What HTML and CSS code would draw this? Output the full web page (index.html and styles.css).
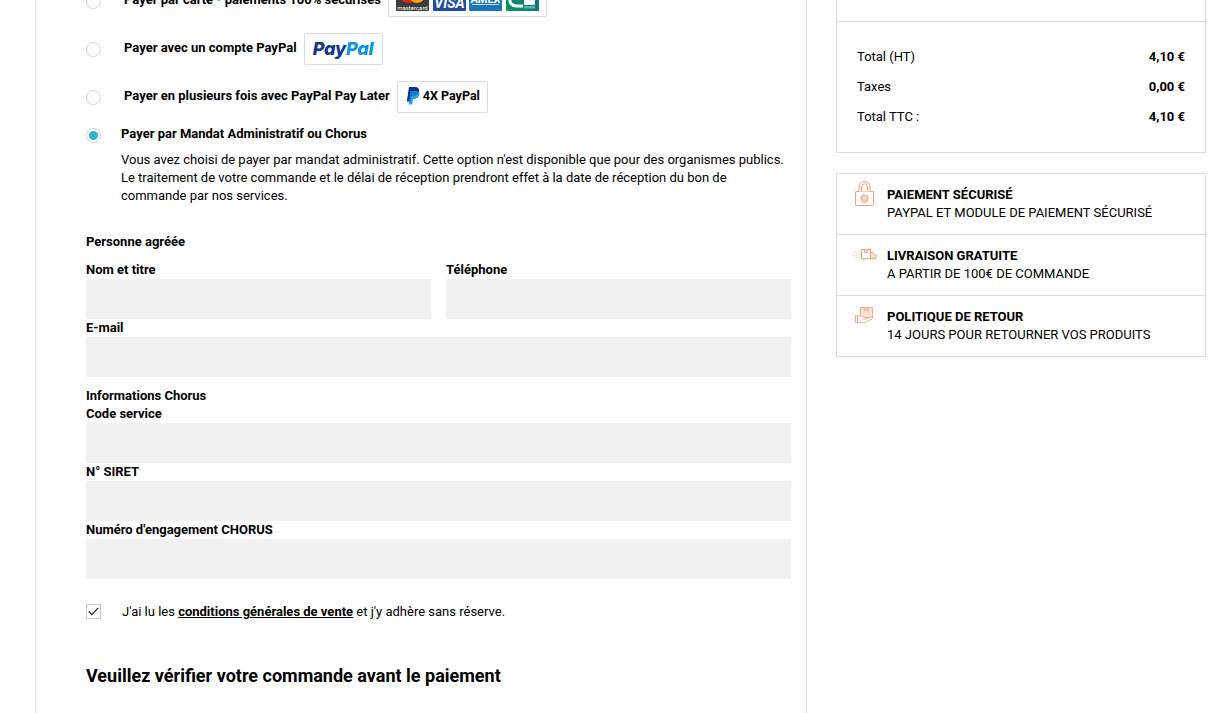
FILE: index.html
```html
<!DOCTYPE html>
<html lang="fr">
<head>
<meta charset="utf-8">
<title>Paiement</title>
<link rel="stylesheet" href="styles.css">
</head>
<body>
<div class="page">
  <main class="main">
    <div class="pay-row">
      <span class="radio"></span>
      <span class="pay-label">Payer par carte - paiements 100% sécurisés</span>
      <span class="badge badge-cards">
        <svg width="143" height="26" viewBox="0 0 143 26" class="cards">
          <rect x="0" y="0" width="33" height="26" rx="1" fill="#3c3a3a"/>
          <circle cx="12" cy="10" r="8" fill="#e2231a"/>
          <circle cx="21" cy="10" r="8" fill="#f79e1b"/>
          <text x="16.500" y="25" class="mc">mastercard</text>
          <rect x="37" y="0" width="33" height="26" rx="1" fill="#1f4f9c"/>
          <text x="53.500" y="23" class="visa">VISA</text>
          <rect x="73" y="0" width="33" height="26" rx="1" fill="#1b75bb"/>
          <text x="89.500" y="18" class="amex">AMEX</text>
          <rect x="76" y="19" width="27" height="1" fill="#cfe4f4"/>
          <defs>
            <linearGradient id="cb" x1="0" y1="1" x2="1" y2="0">
              <stop offset="0" stop-color="#0a9a5f"/>
              <stop offset="1" stop-color="#12608f"/>
            </linearGradient>
          </defs>
          <rect x="110" y="0" width="33" height="26" rx="1" fill="url(#cb)"/>
          <path d="M127 8.500h-7a6 6 0 0 0 0 12.500h7" fill="none" stroke="#fff" stroke-width="3"/>
          <rect x="128" y="14" width="11" height="6" rx="1" fill="#fff"/>
          <rect x="128" y="21" width="11" height="2.500" fill="#5fb0c4"/>
        </svg>
      </span>
    </div>
    <div class="pay-row">
      <span class="radio"></span>
      <span class="pay-label">Payer avec un compte PayPal</span>
      <span class="badge badge-paypal"><span class="pp-pay">Pay</span><span class="pp-pal">Pal</span></span>
    </div>
    <div class="pay-row">
      <span class="radio"></span>
      <span class="pay-label">Payer en plusieurs fois avec PayPal Pay Later</span>
      <span class="badge badge-4x">
        <svg class="pp-mark" width="14" height="18" viewBox="0 0 14 18">
          <path d="M3 0h6c3 0 4.500 1.600 4 4.300C12.400 7.600 10.300 9 7.300 9H5.400L4.500 14.500H0.800Z" fill="#0f2f8a"/>
          <path d="M4.500 4h5.500c2.500 0 3.800 1.300 3.400 3.600C12.900 10.400 11 12 8.400 12H7L6.200 17.500H2.600Z" fill="#0a8fdc" opacity="0.850"/>
        </svg>
        <span class="fourx">4X PayPal</span>
      </span>
    </div>
    <div class="mandat">
      <span class="radio radio-on"></span>
      <div class="mandat-body">
        <div class="mandat-title">Payer par Mandat Administratif ou Chorus</div>
        <p class="mandat-text">Vous avez choisi de payer par mandat administratif. Cette option n'est disponible que pour des organismes publics. Le traitement de votre commande et le délai de réception prendront effet à la date de réception du bon de commande par nos services.</p>
      </div>
    </div>

    <form class="form">
      <div class="section-title">Personne agréée</div>
      <div class="two-col">
        <div class="field">
          <label class="label">Nom et titre</label>
          <div class="input"></div>
        </div>
        <div class="field">
          <label class="label">Téléphone</label>
          <div class="input"></div>
        </div>
      </div>
      <div class="field">
        <label class="label">E-mail</label>
        <div class="input"></div>
      </div>
      <div class="section-title section-chorus">Informations Chorus</div>
      <div class="field">
        <label class="label">Code service</label>
        <div class="input"></div>
      </div>
      <div class="field">
        <label class="label">N° SIRET</label>
        <div class="input"></div>
      </div>
      <div class="field">
        <label class="label">Numéro d'engagement CHORUS</label>
        <div class="input"></div>
      </div>
    </form>

    <div class="terms">
      <span class="checkbox">
        <svg width="11" height="9" viewBox="0 0 11 9"><path d="M0.800 4.500 3.800 7.600 10.200 0.800" fill="none" stroke="#222" stroke-width="1.200"/></svg>
      </span>
      <span class="terms-text">J'ai lu les <a class="terms-link">conditions générales de vente</a> et j'y adhère sans réserve.</span>
    </div>
    <h2 class="review">Veuillez vérifier votre commande avant le paiement</h2>
  </main>

  <aside class="side">
    <div class="totals">
      <div class="totals-top"></div>
      <div class="totals-rows">
        <div class="total-row"><span>Total (HT)</span><b>4,10 €</b></div>
        <div class="total-row"><span>Taxes</span><b>0,00 €</b></div>
        <div class="total-row"><span>Total TTC :</span><b>4,10 €</b></div>
      </div>
    </div>
    <div class="trust">
      <div class="trust-row">
        <svg class="trust-icon icon-lock" width="19" height="25" viewBox="0 0 19 25">
          <rect x="0.500" y="10.500" width="18" height="14" rx="0.500" fill="#fff" stroke="#f79f7b"/>
          <path d="M4 10.500V5a5.500 4.500 0 0 1 11 0v5.500M6.500 10.500V5.500a3 2.800 0 0 1 6 0v5" fill="#fff" stroke="#f79f7b"/>
          <rect x="6" y="14" width="7" height="7" rx="3" fill="#fbd3c2" stroke="#f79f7b"/>
        </svg>
        <div class="trust-text"><b>PAIEMENT SÉCURISÉ</b><span>PAYPAL ET MODULE DE PAIEMENT SÉCURISÉ</span></div>
      </div>
      <div class="trust-row">
        <svg class="trust-icon icon-truck" width="25" height="24" viewBox="0 0 25 24">
          <circle cx="13" cy="12" r="11.500" fill="none" stroke="#fde4d9" stroke-width="0.600" stroke-dasharray="1 2"/>
          <rect x="9.500" y="6.500" width="9" height="9" fill="#fff" stroke="#f79f7b"/>
          <path d="M12.500 6.500v3h3v-3" fill="#fbc9b4" stroke="#f79f7b" stroke-width="0.700"/>
          <path d="M18.500 9.500h2.500l3 3v3h-5.500Z" fill="#fde3d8" stroke="#f79f7b"/>
          <path d="M2 9h6M0 12h8M3 15h5" fill="none" stroke="#fcd5c5"/>
          <circle cx="12" cy="16" r="1" fill="#fff" stroke="#f79f7b" stroke-width="0.700"/>
          <circle cx="21" cy="16" r="1" fill="#fff" stroke="#f79f7b" stroke-width="0.700"/>
        </svg>
        <div class="trust-text"><b>LIVRAISON GRATUITE</b><span>A PARTIR DE 100€ DE COMMANDE</span></div>
      </div>
      <div class="trust-row">
        <svg class="trust-icon icon-hand" width="24" height="22" viewBox="0 0 24 22">
          <path d="M14 0v1M5 1l1 1M23 1l-1 1M0 9h1M24 9h-1M2 17h1M22 19h1M14 21v1" stroke="#fcdccf" fill="none"/>
          <rect x="8.500" y="2.500" width="12" height="10" fill="#fde3d8" stroke="#f8a98a"/>
          <path d="M12.500 2.500v3h4v-3" fill="#f8bfa6" stroke="#f8a98a" stroke-width="0.700"/>
          <path d="M3.500 10.500h2v7h-2ZM5.500 11.500c2-1 4-.5 5 .5h3c1.500 0 1.500 2 0 2h-3M13.500 14l5-2c2-.5 3 1 1 2l-6 3.500h-8" fill="#fff" stroke="#f8a98a"/>
        </svg>
        <div class="trust-text"><b>POLITIQUE DE RETOUR</b><span>14 JOURS POUR RETOURNER VOS PRODUITS</span></div>
      </div>
    </div>
  </aside>
</div>
</body>
</html>
```

FILE: styles.css
```css
* { box-sizing: border-box; }
html, body { margin: 0; height: 713px; overflow: hidden; background: #fff; }
body { font-family: Roboto, "Liberation Sans", sans-serif; font-size: 13px; color: #000; }

.page { display: flex; align-items: flex-start; margin-top: -15px; padding-left: 35px; }

.main {
  width: 772px;
  height: 760px;
  flex: none;
  border-left: 1px solid #e3e3e3;
  border-right: 1px solid #e3e3e3;
  padding: 0 15px 0 50px;
}

.pay-row { display: flex; align-items: center; height: 32px; margin-bottom: 16px; }
.radio {
  width: 15px; height: 15px; flex: none;
  border: 1px solid #cfcfcf; border-radius: 50%;
  background: #fff; position: relative;
}
.radio-on::after {
  content: ""; position: absolute; left: 2px; top: 2px;
  width: 9px; height: 9px; border-radius: 50%; background: #2fb5d2;
}
.pay-label { margin-left: 23px; font-weight: 700; line-height: 18px; margin-top: -3px; }
.badge {
  display: flex; align-items: center; height: 32px; margin-left: 7px;
  border: 1px solid #dcdcdc; border-radius: 2px; background: #fff;
}
.badge-cards { width: 159px; padding: 0 0 0 7px; align-items: flex-end; }
.cards { display: block; margin-bottom: 5px; }
.cards text { font-family: Roboto, sans-serif; text-anchor: middle; fill: #fff; }
.cards .mc { font-size: 6px; }
.cards .visa { font-size: 14px; font-weight: 700; font-style: italic; }
.cards .amex { font-size: 11px; font-weight: 700; }
.badge-paypal { width: 79px; justify-content: center; font-family: Inter, Roboto, sans-serif; font-size: 18px; font-weight: 800; font-style: italic; letter-spacing: -0.200px; padding-bottom: 2px; }
.pp-pay { color: #12388c; }
.pp-pal { color: #0a97dd; }
.badge-4x { width: 91px; padding-left: 8px; }
.pp-mark { margin-top: -2px; }
.fourx { margin-left: 3px; font-weight: 700; font-size: 12.500px; margin-top: -4px; }

.mandat { display: flex; margin-top: -3px; }
.mandat .radio { margin-top: 2px; }
.mandat-body { margin-left: 20px; }
.mandat-title { font-weight: 700; line-height: 18px; margin-top: -1px; }
.mandat-text { margin: 8px 0 0; line-height: 18px; }

.form { margin-top: 28px; }
.section-title { font-weight: 700; line-height: 18px; }
.section-chorus { margin-top: 10px; }
.two-col { display: grid; grid-template-columns: 1fr 1fr; gap: 15px; margin-top: 10px; }
.label { display: block; font-weight: 700; line-height: 18px; }
.input { height: 40px; background: #f1f1f1; }

.terms { display: flex; align-items: center; margin-top: 25px; height: 15px; }
.checkbox {
  width: 15px; height: 15px; flex: none; display: flex; align-items: center; justify-content: center;
  border: 1px solid #c9c9c9; background: #fff;
}
.terms-text { margin-left: 21px; }
.terms-link { font-weight: 700; text-decoration: underline; }
.review { margin: 45px 0 0; font-size: 18px; line-height: 24px; font-weight: 700; }

.side { width: 370px; margin-left: 29px; flex: none; }
.totals { border: 1px solid #dcdcdc; }
.totals-top { height: 36px; border-bottom: 1px solid #dcdcdc; }
.totals-rows { padding: 20px 20px 20px; }
.total-row { display: flex; justify-content: space-between; height: 30px; line-height: 30px; }
.total-row b { font-weight: 700; }

.trust { margin-top: 20px; border: 1px solid #dcdcdc; }
.trust-row { display: flex; align-items: flex-start; height: 61px; padding-top: 12px; border-bottom: 1px solid #dcdcdc; position: relative; }
.trust-row:last-child { border-bottom: 0; height: 60px; }
.trust-icon { position: absolute; }
.icon-lock { left: 18px; top: 7px; }
.icon-truck { left: 15px; top: 8px; }
.icon-hand { left: 15px; top: 9px; }
.trust-text { margin-left: 50px; display: flex; flex-direction: column; line-height: 18px; }
.trust-text b { font-weight: 700; }
```
